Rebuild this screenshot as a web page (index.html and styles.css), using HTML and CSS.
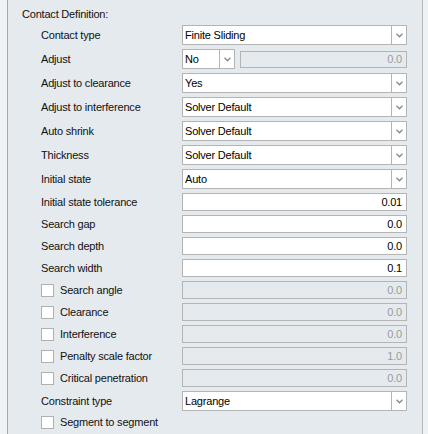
FILE: index.html
```html
<!DOCTYPE html>
<html>
<head>
<meta charset="utf-8">
<link rel="stylesheet" href="styles.css">
</head>
<body>
<div class="page">
  <div class="panel">
    <div class="title">Contact Definition:</div>
    <div class="form">
      <div class="label">Contact type</div>
      <div class="combo"><span class="val">Finite Sliding</span><span class="btn"><svg width="7" height="5" viewBox="0 0 7 5"><path d="M0.5 0.8 L3.5 3.8 L6.5 0.8" fill="none" stroke="#8c8c8c" stroke-width="1.4"/></svg></span></div>

      <div class="label">Adjust</div>
      <div class="pair">
        <div class="combo small"><span class="val">No</span><span class="btn"><svg width="7" height="5" viewBox="0 0 7 5"><path d="M0.5 0.8 L3.5 3.8 L6.5 0.8" fill="none" stroke="#8c8c8c" stroke-width="1.4"/></svg></span></div>
        <div class="field disabled thin">0.0</div>
      </div>

      <div class="label">Adjust to clearance</div>
      <div class="combo"><span class="val">Yes</span><span class="btn"><svg width="7" height="5" viewBox="0 0 7 5"><path d="M0.5 0.8 L3.5 3.8 L6.5 0.8" fill="none" stroke="#8c8c8c" stroke-width="1.4"/></svg></span></div>

      <div class="label">Adjust to interference</div>
      <div class="combo"><span class="val">Solver Default</span><span class="btn"><svg width="7" height="5" viewBox="0 0 7 5"><path d="M0.5 0.8 L3.5 3.8 L6.5 0.8" fill="none" stroke="#8c8c8c" stroke-width="1.4"/></svg></span></div>

      <div class="label">Auto shrink</div>
      <div class="combo"><span class="val">Solver Default</span><span class="btn"><svg width="7" height="5" viewBox="0 0 7 5"><path d="M0.5 0.8 L3.5 3.8 L6.5 0.8" fill="none" stroke="#8c8c8c" stroke-width="1.4"/></svg></span></div>

      <div class="label">Thickness</div>
      <div class="combo"><span class="val">Solver Default</span><span class="btn"><svg width="7" height="5" viewBox="0 0 7 5"><path d="M0.5 0.8 L3.5 3.8 L6.5 0.8" fill="none" stroke="#8c8c8c" stroke-width="1.4"/></svg></span></div>

      <div class="label">Initial state</div>
      <div class="combo"><span class="val">Auto</span><span class="btn"><svg width="7" height="5" viewBox="0 0 7 5"><path d="M0.5 0.8 L3.5 3.8 L6.5 0.8" fill="none" stroke="#8c8c8c" stroke-width="1.4"/></svg></span></div>

      <div class="label">Initial state tolerance</div>
      <div class="field">0.01</div>

      <div class="label">Search gap</div>
      <div class="field">0.0</div>

      <div class="label">Search depth</div>
      <div class="field">0.0</div>

      <div class="label">Search width</div>
      <div class="field">0.1</div>

      <div class="label check"><span class="box"></span>Search angle</div>
      <div class="field disabled">0.0</div>

      <div class="label check"><span class="box"></span>Clearance</div>
      <div class="field disabled">0.0</div>

      <div class="label check"><span class="box"></span>Interference</div>
      <div class="field disabled">0.0</div>

      <div class="label check"><span class="box"></span>Penalty scale factor</div>
      <div class="field disabled">1.0</div>

      <div class="label check"><span class="box"></span>Critical penetration</div>
      <div class="field disabled">0.0</div>

      <div class="label">Constraint type</div>
      <div class="combo"><span class="val">Lagrange</span><span class="btn"><svg width="7" height="5" viewBox="0 0 7 5"><path d="M0.5 0.8 L3.5 3.8 L6.5 0.8" fill="none" stroke="#8c8c8c" stroke-width="1.4"/></svg></span></div>

      <div class="label check wide"><span class="box"></span>Segment to segment</div>
    </div>
  </div>
</div>
</body>
</html>
```

FILE: styles.css
```css
html, body {
  margin: 0;
  padding: 0;
}
body {
  background: #eef2f5;
  font-family: "Liberation Sans", Arial, sans-serif;
  font-size: 11px;
  letter-spacing: -0.2px;
  color: #111;
  width: 428px;
  height: 434px;
  overflow: hidden;
}
.page {
  padding-left: 7px;
}
.panel {
  width: 414px;
  height: 434px;
  box-sizing: content-box;
  background: #e5eaee;
  border-left: 1px solid #a3a9ae;
  border-right: 1px solid #b3b8bc;
}
.title {
  padding: 6px 0 0 14px;
  height: 16px;
  line-height: 16px;
  margin-bottom: 3px;
}
.form {
  display: grid;
  grid-template-columns: 141px 225px;
  row-gap: 4px;
  padding-left: 33px;
  align-items: center;
}
.label {
  line-height: 14px;
  white-space: nowrap;
}
.label.check {
  display: flex;
  align-items: center;
}
.label.wide {
  grid-column: 1 / 3;
}
.box {
  display: inline-block;
  width: 13px;
  height: 13px;
  box-sizing: border-box;
  border: 1px solid #b0b0b0;
  background: #ffffff;
  margin-right: 6px;
}
.combo {
  display: flex;
  height: 20px;
  box-sizing: border-box;
  border: 1px solid #b4b4b4;
  background: #ffffff;
  color: #000;
}
.combo .val {
  flex: 1;
  line-height: 18px;
  padding-left: 2px;
  overflow: hidden;
  white-space: nowrap;
}
.combo .btn {
  width: 15px;
  box-sizing: border-box;
  border-left: 1px solid #b4b4b4;
  display: flex;
  align-items: center;
  justify-content: center;
}
.combo.small {
  width: 53px;
  flex: none;
}
.pair {
  display: flex;
  align-items: center;
  gap: 5px;
}
.field {
  height: 18px;
  box-sizing: border-box;
  border: 1px solid #b4b4b4;
  background: #ffffff;
  color: #000;
  text-align: right;
  padding-right: 4px;
  line-height: 16px;
}
.field.disabled {
  background: #e5eaee;
  color: #9a9a9a;
}
.pair .field {
  flex: 1;
  height: 17px;
  line-height: 15px;
}
```
